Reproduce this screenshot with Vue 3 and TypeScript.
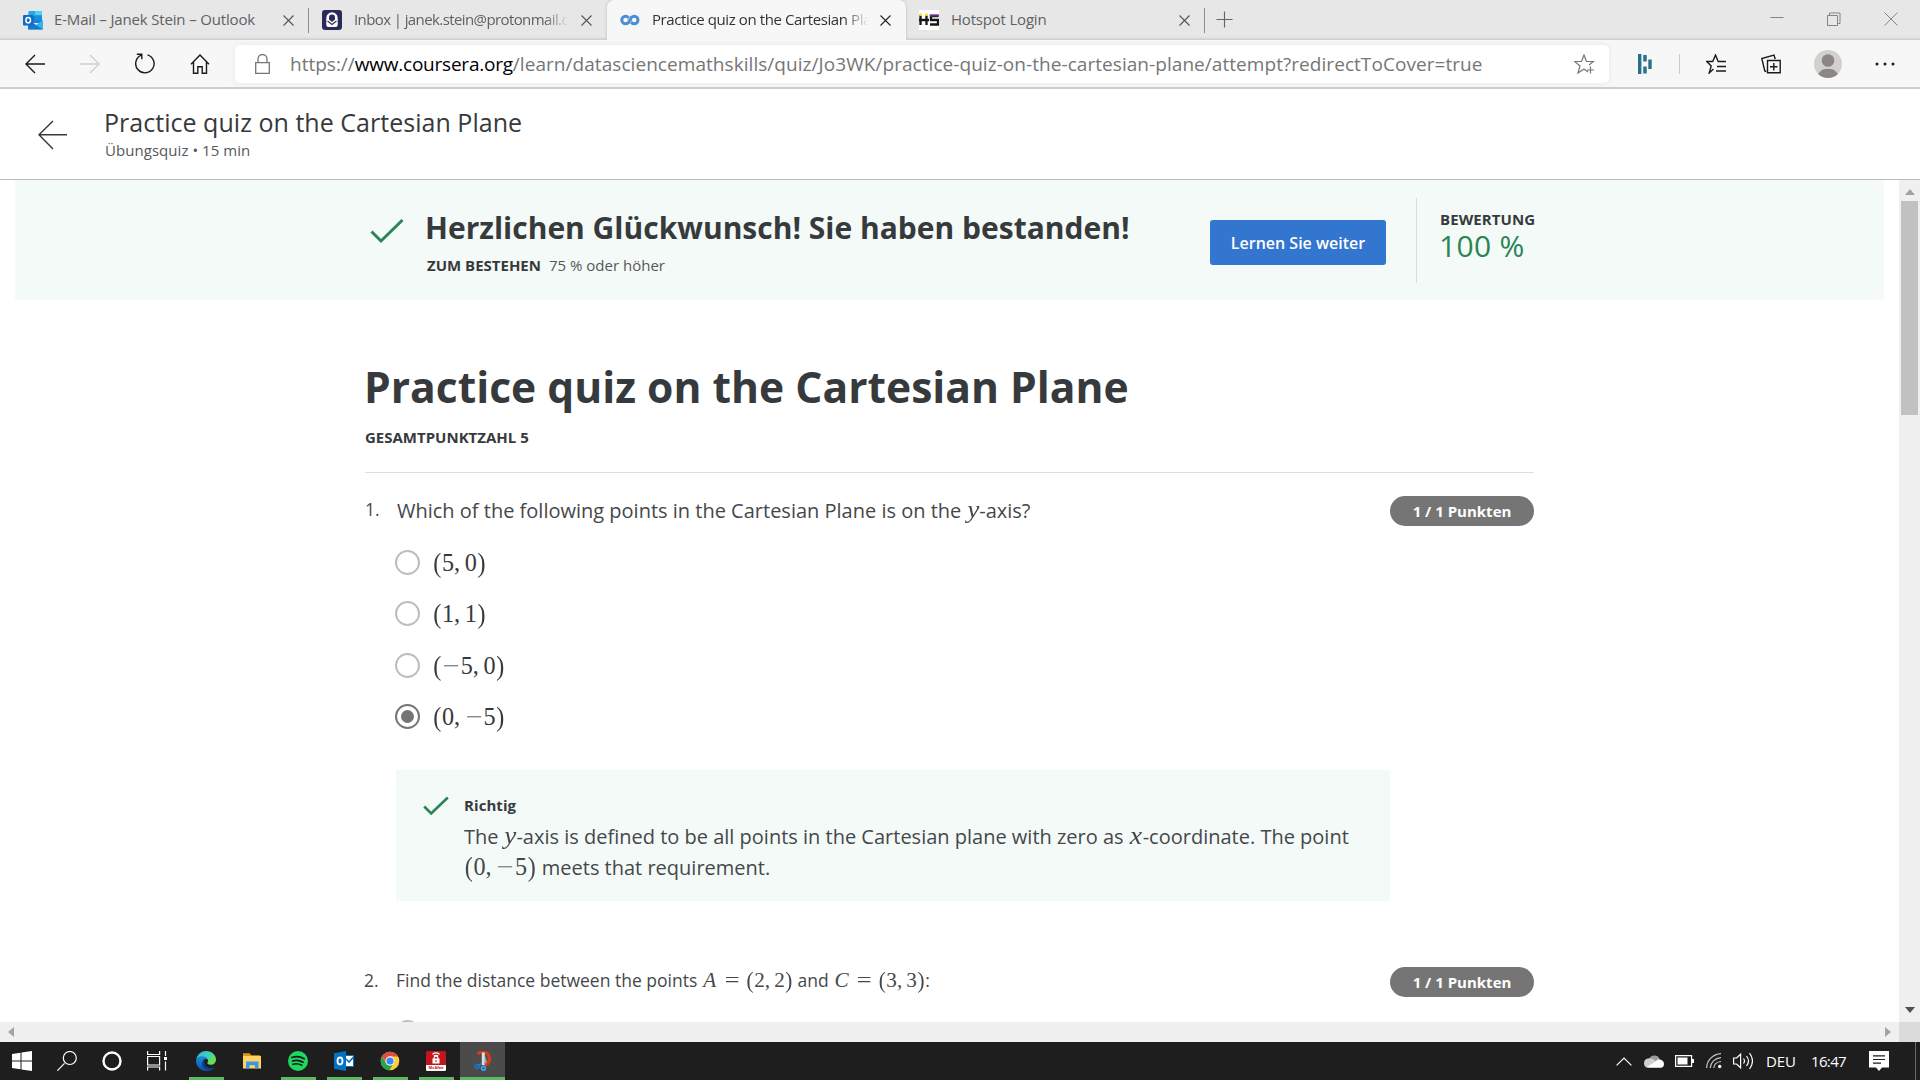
<script setup lang="ts">
import { h } from 'vue'

interface Tab {
  icon: 'outlook' | 'proton' | 'coursera' | 'hotspot'
  title: string
  width: number
  spacing: number
  active?: boolean
  faded?: boolean
  divider?: boolean
}

const tabs: Tab[] = [
  { icon: 'outlook', title: 'E-Mail – Janek Stein – Outlook', width: 309, spacing: -0.16, divider: true },
  { icon: 'proton', title: 'Inbox | janek.stein@protonmail.com', width: 298, spacing: -0.6, faded: true },
  { icon: 'coursera', title: 'Practice quiz on the Cartesian Plane', width: 299, spacing: -0.4, active: true, faded: true },
  { icon: 'hotspot', title: 'Hotspot Login', width: 299, spacing: -0.2, divider: true },
]

const answers = [
  { value: '(5,0)', checked: false },
  { value: '(1,1)', checked: false },
  { value: '(−5,0)', checked: false },
  { value: '(0,−5)', checked: true },
]

const taskbarApps = [
  { name: 'edge', running: true },
  { name: 'explorer', running: false },
  { name: 'spotify', running: true },
  { name: 'outlook', running: true },
  { name: 'chrome', running: true },
  { name: 'mcafee', running: true },
  { name: 'snip', running: true },
]

/* Advance widths in em for typeset math glyphs */
const glyphClass: Record<string, string> = {
  '(': 'tex-paren', ')': 'tex-paren', ',': 'tex-comma', '−': 'tex-minus', '=': 'tex-eq',
  A: 'tex-A', C: 'tex-C', x: 'tex-x', y: 'tex-y',
}
const Tex = (props: { t: string }) =>
  h('span', { class: 'tex' }, [...props.t].map((c) => h('span', { class: glyphClass[c] ?? 'tex-digit' }, c)))
Tex.props = ['t']
</script>

<template>
  <div class="screen">
    <div class="tabbar">
      <div v-for="tab in tabs" :key="tab.title" class="tab" :class="{ active: tab.active, divider: tab.divider }" :style="{ width: tab.width + 'px' }">
        <svg v-if="tab.icon === 'outlook'" class="favicon" viewBox="0 0 20 20">
          <rect x="5.5" y="1" width="13.5" height="12" rx="1" fill="#1a82d6" />
          <rect x="12" y="1" width="7" height="4.5" fill="#50d0f5" />
          <rect x="6" y="1" width="6" height="5" fill="#28a8ea" />
          <rect x="12" y="5.5" width="7" height="4.5" fill="#1490df" />
          <path d="M5 10l8 5 7-5v8.500q0 1-1 1H6q-1 0-1-1z" fill="#33b1f0" />
          <path d="M5 10l15 9.500H6q-1 0-1-1z" fill="#1a78c8" />
          <rect x="0" y="5" width="10.500" height="10.500" rx="1" fill="#0f6cc4" />
          <ellipse cx="5.200" cy="10.200" rx="2.300" ry="2.600" fill="none" stroke="#fff" stroke-width="1.500" />
        </svg>
        <svg v-else-if="tab.icon === 'proton'" class="favicon" viewBox="0 0 20 20">
          <rect width="20" height="20" rx="3" fill="#2b2a5a" />
          <path d="M4.300 14.500V8a5.700 5.700 0 0 1 11.400 0v6.500q0 2.500-2.500 2.500H6.800q-2.500 0-2.500-2.500z" fill="#fff" />
          <path d="M7 9.500V7.500a3 3 0 0 1 6 0v2l-3 2.500z" fill="#2b2a5a" />
          <path d="M5.500 11l4.500 3.500 4.500-3.500" fill="none" stroke="#2b2a5a" stroke-width="1.100" />
        </svg>
        <svg v-else-if="tab.icon === 'coursera'" class="favicon" viewBox="0 0 20 20">
          <circle cx="5.600" cy="10" r="3.800" fill="none" stroke="#4a8fd3" stroke-width="3" />
          <circle cx="14.200" cy="10" r="3.800" fill="none" stroke="#4a8fd3" stroke-width="3" />
          <path d="M9.900 7.500v5" stroke="#f7f7f7" stroke-width="2.800" />
          <path d="M8.300 12.800q1.200-1 1.700-2.800t1.700-2.800" fill="none" stroke="#4a8fd3" stroke-width="2.600" />
        </svg>
        <svg v-else class="favicon" viewBox="0 0 20 20">
          <rect width="20" height="20" fill="#fff" />
          <path d="M1.500 5v10M7.500 5v10M0 10h10M19.500 6h-7.500v4h7v4.500h-8" fill="none" stroke="#161616" stroke-width="2.300" />
          <path d="M.4 4.800h2.400M6.400 4.800h2.400" stroke="#f3e11c" stroke-width="2.600" />
          <path d="M10.800 5.500h9" stroke="#6d2a8c" stroke-width="2" />
        </svg>
        <span class="tab-title" :class="{ faded: tab.faded }" :style="{ letterSpacing: tab.spacing + 'px' }">{{ tab.title }}</span>
        <svg class="tab-close" viewBox="0 0 11 11"><path d="M.5.5l10 10M10.500.5l-10 10" /></svg>
      </div>
      <svg class="new-tab" viewBox="0 0 18 18"><path d="M9 .5v17M.5 9h17" /></svg>
      <div class="window-controls">
        <svg viewBox="0 0 14 14"><path d="M.5 5.500h13" /></svg>
        <svg viewBox="0 0 14 14"><path d="M.5 3.500h10v10H.5zM2.500 3.500v-2.500h10.500v10.500h-2.500" /></svg>
        <svg viewBox="0 0 14 14"><path d="M.5.5l13 13M13.500.5l-13 13" /></svg>
      </div>
    </div>

    <div class="toolbar">
      <svg class="ico back" viewBox="0 0 20 20"><path d="M20 10H1M10 1L1 10l9 9" /></svg>
      <svg class="ico fwd" viewBox="0 0 20 20"><path d="M0 10h19M10 1l9 9-9 9" /></svg>
      <svg class="ico reload" viewBox="0 0 20 21"><path d="M12.500 1.800a9.200 9.200 0 1 1-6.300.4M1.800 1.200h5v5" /></svg>
      <svg class="ico home" viewBox="0 0 20 20"><path d="M1 10.200L10 1l9 9.200M3.500 8v11.200h4.300v-6.500h4.400v6.500h4.300V8" /></svg>
      <div class="address">
        <svg class="lock" viewBox="0 0 15 20"><path d="M.7 8.700h13.600v10.600H.7zM3 8.700V5a4.500 4.500 0 0 1 9 0v3.700" /></svg>
        <div class="url"><span class="scheme">https://</span><span class="host">www.coursera.org</span><span class="path">/learn/datasciencemathskills/quiz/Jo3WK/practice-quiz-on-the-cartesian-plane/attempt?redirectToCover=true</span></div>
        <svg class="star" viewBox="0 0 21 20"><path d="M14 18l-4-3-6 4 2-7-5.500-4.500h7L10 1l2.500 6.500h7L15 11M16.500 12.500v7M13 16h7" /></svg>
      </div>
      <svg class="ext" viewBox="0 0 14 20"><path d="M1.700 0v20M7 1v6.500M7 12.500v7M12 5.500v9.500" /></svg>
      <i class="tool-sep"></i>
      <svg class="ico favs" viewBox="0 0 20 20"><path d="M7.500 15L3.200 19l2-7L.8 7.500h5.900L9.500 1l2.700 6.500H20M11 12.500h9M10 17h10" /></svg>
      <svg class="ico colls" viewBox="0 0 20 20"><path d="M6.500 6.500h12.700v12.300H6.500zM12.800 9v7.500M9 12.700h7.500M5.200 17.500L3.800 17 .8 4.500 13 1l1.200 4" /></svg>
      <svg class="avatar" viewBox="0 0 28 28">
        <defs><clipPath id="avatar-clip"><circle cx="14" cy="14" r="14" /></clipPath></defs>
        <g clip-path="url(#avatar-clip)"><rect width="28" height="28" fill="#d3d1cd" /><circle cx="14" cy="10.500" r="6.300" fill="#8c8784" /><path d="M3.500 28c0-6 4.500-9.300 10.500-9.300S24.500 22 24.500 28z" fill="#8c8784" /></g>
      </svg>
      <svg class="dots" viewBox="0 0 20 4"><circle cx="2" cy="2" r="1.500" /><circle cx="10" cy="2" r="1.500" /><circle cx="18" cy="2" r="1.500" /></svg>
    </div>

    <header class="quiz-header">
      <svg class="quiz-back" viewBox="0 0 30 30"><path d="M30 14.800H1M15.500.5L1 14.800l14.500 14.700" /></svg>
      <div>
        <div class="quiz-title">Practice quiz on the Cartesian Plane</div>
        <div class="quiz-sub">Übungsquiz • 15 min</div>
      </div>
    </header>

    <div class="viewport">
      <main class="page">
        <section class="banner">
          <svg class="banner-check" viewBox="0 0 34 26"><path d="M1.500 13.500l9.500 9.500L32.500 2" /></svg>
          <div class="banner-text">
            <h2>Herzlichen Glückwunsch! Sie haben bestanden!</h2>
            <p><b>ZUM BESTEHEN</b><span>75 % oder höher</span></p>
          </div>
          <button class="continue">Lernen Sie weiter</button>
          <div class="grade"><b>BEWERTUNG</b><span>100 %</span></div>
        </section>

        <div class="quiz">
          <h1>Practice quiz on the Cartesian Plane</h1>
          <div class="total">GESAMTPUNKTZAHL 5</div>
          <section class="question first">
            <div class="num">1.</div>
            <div class="prompt">Which of the following points in the Cartesian Plane is on the <Tex t="y" />-axis?</div>
            <div class="badge">1 / 1 Punkten</div>
          </section>
          <div class="answers">
            <label v-for="a in answers" :key="a.value"><i class="radio" :class="{ checked: a.checked }"></i><Tex :t="a.value" /></label>
          </div>
          <section class="feedback">
            <svg class="feedback-check" viewBox="0 0 26 20"><path d="M1.200 10.500l7 7L24.800 1.500" /></svg>
            <div>
              <b>Richtig</b>
              <p>The <Tex t="y" />-axis is defined to be all points in the Cartesian plane with zero as <Tex t="x" />-coordinate. The point<br><Tex t="(0,−5)" /> meets that requirement.</p>
            </div>
          </section>
          <section class="question second">
            <div class="num">2.</div>
            <div class="prompt">Find the distance between the points <Tex t="A=(2,2)" /> and <Tex t="C=(3,3)" />:</div>
            <div class="badge">1 / 1 Punkten</div>
          </section>
          <div class="answers next"><label><i class="radio"></i></label></div>
        </div>
      </main>
      <div class="vscroll">
        <svg viewBox="0 0 10 6"><path d="M5 0l5 6H0z" fill="#a3a3a3" /></svg>
        <div class="thumb"></div>
        <svg class="down" viewBox="0 0 10 6"><path d="M0 0h10L5 6z" fill="#505050" /></svg>
      </div>
    </div>
    <div class="hscroll">
      <svg viewBox="0 0 6 10"><path d="M6 0v10L0 5z" fill="#a3a3a3" /></svg>
      <svg class="right" viewBox="0 0 6 10"><path d="M0 0v10l6-5z" fill="#a3a3a3" /></svg>
      <div class="corner"></div>
    </div>

    <footer class="taskbar">
      <div class="system">
        <svg viewBox="0 0 20 20"><path d="M0 3l8.500-1.200v7.700H0zM9.500 1.600L20 0v9.500H9.500zM0 10.500h8.500v7.700L0 17zM9.500 10.500H20V20L9.500 18.400z" fill="#fff" /></svg>
        <svg viewBox="0 0 20 20"><path d="M.3 19.700L7.500 12.300" class="w" /><circle cx="12.800" cy="7" r="6.500" class="w" /></svg>
        <svg viewBox="0 0 20 20"><circle cx="10" cy="10" r="8.500" class="w bold" /></svg>
        <svg viewBox="0 0 20 20"><path d="M.6 0v3.500h12V0M.6 5.500h12v8.500H.6zM.6 19.500V16h12v3.500M18.500 0v5M18.500 10.500v9" class="w" /><path d="M17 6h3v3h-3z" fill="#fff" /></svg>
      </div>
      <div class="apps">
        <div v-for="app in taskbarApps" :key="app.name" class="app" :class="[app.name, { running: app.running }]">
          <svg v-if="app.name === 'edge'" viewBox="0 0 20 20">
            <defs>
              <linearGradient id="edge-top" x1="0" y1="0" x2="1" y2=".5"><stop offset="0" stop-color="#2bb6e8" /><stop offset=".6" stop-color="#3fd0b8" /><stop offset="1" stop-color="#6fe04c" /></linearGradient>
              <linearGradient id="edge-low" x1="0" y1="0" x2="0" y2="1"><stop offset="0" stop-color="#1590dd" /><stop offset="1" stop-color="#0e4fa5" /></linearGradient>
            </defs>
            <path d="M.3 8C1.500 3 5.500 0 10.200 0 16 0 20 4.200 20 8.500c0 3.500-2.600 5.300-5.200 5.300-2.400 0-3.500-.9-3.500-1.700 0-.6.8-1 .8-2.300C12 7 8.500 5.500 5.500 5.800 3 6 1.200 7 .3 8z" fill="url(#edge-top)" />
            <path d="M0 10c.2-3 3-4.700 6-4.500 3 .1 6 2 6 4.300 0-1.200-1.500-2.300-3-1.700-3.500 1.500-2.500 8.600 5 9.400 1.500.2 3-.2 4.500-1C16.500 19 13.500 20 10.500 20 4.500 20 0 15.500 0 10z" fill="url(#edge-low)" />
            <path d="M9 8.100C6 9 4.500 14 8.300 17.500c3 2.500 8 1.500 10.200-1-4 1.800-9.300.5-10-4.200-.2-1.700 0-3 .5-4.200z" fill="#0d3f84" />
          </svg>
          <svg v-else-if="app.name === 'explorer'" viewBox="0 0 20 20">
            <path d="M1 2.200h6.500l2 2H18v5H1z" fill="#d99a10" /><path d="M1 5h18v12.500H1z" fill="#fcd364" /><path d="M4 10.500h12.500v7h-3.500v-3.300H7.500v3.300H4z" fill="#3a98e2" />
          </svg>
          <svg v-else-if="app.name === 'spotify'" viewBox="0 0 20 20">
            <circle cx="10" cy="10" r="10" fill="#1ed760" /><path d="M3.800 6.500c4-1.200 9-.8 12.400 1.300M4.500 10c3.500-1 7.500-.6 10.600 1.200M5 13.200c3-.8 6.200-.5 8.800 1" fill="none" stroke="#181818" stroke-width="1.700" stroke-linecap="round" />
          </svg>
          <svg v-else-if="app.name === 'outlook'" viewBox="0 0 20 20">
            <rect x="11.500" y="4.500" width="8" height="11" fill="#fff" stroke="#0072c6" /><path d="M12 8l3 3 5-5.500" fill="none" stroke="#0072c6" stroke-width="1.600" /><path d="M0 2.200L12 0v20L0 17.800z" fill="#0072c6" /><ellipse cx="6" cy="10" rx="2.500" ry="3.500" fill="none" stroke="#fff" stroke-width="1.800" />
          </svg>
          <svg v-else-if="app.name === 'chrome'" viewBox="0 0 20 20">
            <circle cx="10" cy="10" r="9.300" fill="#fccd3c" />
            <path d="M1.900 5.400A9.300 9.300 0 0 0 9.500 19.300L13.800 12 10 10 6.300 12z" fill="#2ba24c" /><path d="M1.900 5.400A9.300 9.300 0 0 1 18.100 5.400L10 5.500 6 11z" fill="#d9503f" />
            <circle cx="10" cy="10" r="4.700" fill="#eef3f8" /><circle cx="10" cy="10" r="3.600" fill="#4285f4" />
          </svg>
          <svg v-else-if="app.name === 'mcafee'" viewBox="0 0 20 20">
            <rect width="20" height="20" rx="1.500" fill="#c3161c" /><path d="M0 14h20v4.500q0 1.500-1.500 1.500h-17Q0 20 0 18.500z" fill="#fff" />
            <path d="M6.500 3.200q3.500-2.700 7 0M7.800 5q2.200-1.600 4.400 0M8 8V7.300a2 2 0 0 1 4 0V8" fill="none" stroke="#fff" stroke-width="1.100" /><rect x="6.500" y="7.500" width="7" height="5" fill="#fff" /><path d="M9.500 9h1v2h-1z" fill="#c3161c" />
            <text x="10" y="18.400" text-anchor="middle" font-family="Open Sans, sans-serif" font-weight="700" font-size="4" fill="#c3161c">McAfee</text>
          </svg>
          <svg v-else viewBox="0 0 20 20">
            <path d="M5 3.200C7-.5 16.500.5 16.500 8c0 4.500-3 6.200-6 6" fill="none" stroke="#cf3f17" stroke-width="3.400" /><path d="M8.800 1.500h3V14h-3z" fill="#dadfe3" /><path d="M12.500 5l1.500 6-3 3z" fill="#9aa5ad" /><path d="M8.500 12.500L4.500 15" stroke="#2d7fd3" stroke-width="2" /><circle cx="4" cy="15.500" r="1.900" fill="none" stroke="#1f6fc2" stroke-width="1.800" /><circle cx="10.500" cy="17.300" r="1.900" fill="none" stroke="#35a4ea" stroke-width="1.800" />
          </svg>
        </div>
      </div>
      <div class="tray">
        <svg class="t-up" viewBox="0 0 16 9"><path d="M.6 8.400L8 1l7.400 7.400" class="w" /></svg>
        <svg class="t-cloud" viewBox="0 0 20 14"><path d="M5 6a5.500 5.500 0 0 1 10.500-1l-3 4-9 2A4 4 0 0 1 5 5z" fill="#9b9b9b" /><path d="M4 4.500q-4 .5-4 4.800 0 3.500 3 4.200l9-6Q8 3.500 4 4.500z" fill="#cfcfcf" /><path d="M2.500 13.200L12 7q2-3 5.500-1Q20 7 20 10q0 3.700-3.500 3.700h-12z" fill="#fff" /></svg>
        <svg class="t-batt" viewBox="0 0 19 12"><path d="M.6.600h16v10.800H.6z" class="w" /><path d="M2.500 2.500h10v7h-10zM17 4h2v4h-2z" fill="#fff" /></svg>
        <svg class="t-wifi" viewBox="0 0 16 16"><g fill="none" stroke="#c8c8c8" stroke-width="1.200"><path d="M.6 15C1 7 7 1 15 .600M4.200 15C4.500 9.500 9 5 15 4.600M7.800 15C8 11.500 11 8.800 15 8.500" /></g><circle cx="13.700" cy="13.500" r="1.700" fill="#fff" /></svg>
        <svg class="t-vol" viewBox="0 0 20 18"><path d="M.6 6h3l4-3.800v13.600L3.600 12h-3zM10.500 6.500q2 2.500 0 5M13.500 4q4 5 0 10M16.500 1q6 8 0 16" class="w" /></svg>
        <span class="lang">DEU</span>
        <span class="clock">16:47</span>
        <svg class="t-note" viewBox="0 0 20 20"><path d="M0 0h20v16.500h-7L10 20l-3-3.500H0z" fill="#fff" /><path d="M4 4.800h12M4 8.500h12M4 12.200h8" stroke="#1e1e1e" stroke-width="1.200" /></svg>
        <i class="desk"></i>
      </div>
    </footer>
  </div>
</template>

<style>
body { margin: 0; overflow: hidden; }
.tex { font-family: "Liberation Serif", serif; font-size: 1.21em; line-height: 0; white-space: nowrap; }
.tex > span { display: inline-block; text-align: center; line-height: 0; }
.tex .tex-digit { width: .5em; }
.tex .tex-paren { width: .389em; transform: scaleY(1.1); }
.tex .tex-comma { width: .445em; text-align: left; }
.tex .tex-minus { width: .778em; transform: scaleX(1.25); color: #77797b; }
.tex .tex-eq { width: .778em; margin: 0 .278em; transform: scaleX(1.25); }
.tex .tex-A { width: .75em; font-style: italic; }
.tex .tex-C { width: .786em; font-style: italic; }
.tex .tex-x { width: .572em; font-style: italic; transform: scaleX(1.15); }
.tex .tex-y { width: .526em; font-style: italic; transform: scaleX(1.12); }
</style>

<style scoped>
.screen { width: 1920px; height: 1080px; overflow: hidden; background: #fff; font-family: "Open Sans", sans-serif; color: #373a3c; display: flex; flex-direction: column; }
svg { display: block; flex: none; }
h1, h2, p { margin: 0; }

.tabbar { height: 40px; flex: none; box-sizing: border-box; background: #e7e7e7; border-bottom: 1px solid #cfcfcf; display: flex; box-shadow: inset 0 -2px 2px -1px #d4d4d4; }
.tab { box-sizing: border-box; height: 40px; flex: none; display: flex; align-items: center; padding: 0 15px 0 13px; position: relative; color: #616161; font-size: 15px; }
.tab:first-child { padding-left: 23px; }
.tab.divider::after { content: ""; position: absolute; right: 0; top: 8px; width: 1px; height: 25px; background: #8e8e8e; }
.tab.active { background: #f7f7f7; border-radius: 7px 7px 0 0; color: #333; box-shadow: 0 0 3px #b8b8b8; clip-path: inset(0 -4px 0 -4px); }
.favicon { width: 20px; height: 20px; margin-right: 12px; }
.tab:first-child .favicon { margin-right: 11px; }
.tab-title { flex: 1; min-width: 0; overflow: hidden; white-space: nowrap; line-height: 24px; margin: 0 12px 2px 0; }
.tab-title.faded { -webkit-mask-image: linear-gradient(90deg, #000 calc(100% - 24px), transparent); mask-image: linear-gradient(90deg, #000 calc(100% - 24px), transparent); }
.tab-close { width: 11px; height: 11px; fill: none; stroke: #555; stroke-width: 1.1; }
.tab.active .tab-close { stroke: #222; }
.new-tab { width: 17px; height: 17px; margin: 11px 0 0 11px; fill: none; stroke: #666; stroke-width: 1.2; }
.window-controls { margin-left: auto; display: flex; gap: 43px; padding: 12px 22px 0 0; fill: none; stroke: #858585; }
.window-controls svg { width: 14px; height: 14px; }

.toolbar { height: 49px; flex: none; box-sizing: border-box; background: #f7f7f7; border-bottom: 2px solid #cdcdcd; display: flex; align-items: center; }
.ico { width: 20px; height: 20px; fill: none; stroke: #1b1b1b; stroke-width: 1.4; }
.back { margin-left: 25px; }
.fwd { margin-left: 35px; stroke: #cfcfcf; }
.reload { margin-left: 35px; height: 21px; }
.home { margin-left: 35px; }
.address { width: 1374px; margin-left: 25px; height: 38px; background: #fff; border-radius: 5px; box-shadow: 0 0 5px #e6e6e6; display: flex; align-items: center; box-sizing: border-box; padding-left: 20px; position: relative; }
.lock { width: 15px; height: 20px; fill: none; stroke: #767676; stroke-width: 1.3; }
.url { margin-left: 20px; font-size: 19px; line-height: 28px; color: #767676; white-space: nowrap; display: flex; }
.host { color: #000; letter-spacing: -.23px; }
.path { letter-spacing: .056px; }
.star { width: 21px; height: 20px; margin-left: auto; margin-right: 14px; fill: none; stroke: #767676; stroke-width: 1.2; }
.ext { width: 14px; height: 20px; margin-left: 29px; fill: none; stroke: #28708a; stroke-width: 3.4; }
.tool-sep { width: 1px; height: 20px; background: #cbcbcb; margin-left: 27px; }
.favs { margin-left: 26px; }
.colls { margin-left: 35px; }
.avatar { width: 28px; height: 28px; margin-left: 33px; }
.dots { width: 20px; height: 4px; margin-left: 33px; fill: #1b1b1b; }

.quiz-header { height: 91px; flex: none; box-sizing: border-box; border-bottom: 1px solid #b9bcbc; display: flex; padding: 16px 0 0 38px; }
.quiz-back { width: 29px; height: 30px; margin: 15px 38px 0 0; fill: none; stroke: #373a3c; stroke-width: 1.5; }
.quiz-title { font-size: 25px; line-height: 35px; letter-spacing: .03px; margin-left: -1px; }
.quiz-sub { font-size: 15px; line-height: 20px; letter-spacing: .05px; color: #55585a; }

.viewport { height: 842px; flex: none; display: flex; }
.page { flex: 1; height: 842px; overflow: hidden; }
.banner { height: 120px; box-sizing: border-box; margin: 0 15px; background: #f4faf8; display: flex; padding-left: 355px; }
.banner-check { width: 34px; height: 26px; margin-top: 38px; fill: none; stroke: #2a8453; stroke-width: 3; }
.banner-text { padding: 28px 0 0 21px; width: 806px; box-sizing: border-box; }
.banner h2 { font-size: 30px; line-height: 40px; font-weight: 700; }
.banner p { font-size: 15px; line-height: 20px; margin: 7px 0 0 2px; display: flex; gap: 8px; }
.banner p span { color: #55585a; }
.continue { width: 176px; height: 45px; margin: 40px 0 0; border: 0; border-radius: 3px; background: #3276d0; color: #fff; font: 600 16px/22px "Open Sans", sans-serif; }
.grade { margin: 18px 0 0 30px; height: 85px; box-sizing: border-box; border-left: 1px solid #d9dddc; padding: 11px 0 0 23px; display: flex; flex-direction: column; }
.grade b { font-size: 15px; line-height: 20px; letter-spacing: .1px; }
.grade span { font-size: 30px; line-height: 34px; color: #2a8453; letter-spacing: .3px; margin-left: -1px; }

.quiz { width: 1169px; margin-left: 365px; padding-top: 56px; }
h1 { font-size: 42.600px; line-height: 60px; font-weight: 700; margin-left: -1px; }
.total { font-size: 15px; line-height: 20px; font-weight: 700; margin-top: 11px; padding-bottom: 25px; border-bottom: 1px solid #dedede; }
.question { display: flex; }
.question.first { margin-top: 22px; }
.num { width: 32px; font-size: 17.5px; line-height: 29px; color: #45484a; }
.prompt { flex: 1; font-size: 20px; line-height: 31px; white-space: nowrap; color: #45484a; }
.badge { width: 144px; height: 30px; margin-top: 1px; border-radius: 15px; background: #757575; color: #fff; font-size: 15px; font-weight: 700; line-height: 30px; text-align: center; }
.answers { margin: 11px 0 0 30px; display: flex; flex-direction: column; font-size: 20px; }
.answers label { height: 51.300px; display: flex; align-items: center; }
.answers label .tex { padding-top: 1px; }
.radio { box-sizing: border-box; width: 25px; height: 25px; border: 2.500px solid #bdbdbd; border-radius: 50%; margin-right: 12.500px; display: flex; align-items: center; justify-content: center; }
.radio.checked { border-color: #757575; }
.radio.checked::after { content: ""; width: 13px; height: 13px; border-radius: 50%; background: #757575; }
.feedback { margin: 27.500px 0 0 31px; width: 994px; height: 131px; box-sizing: border-box; background: #f4faf8; padding: 25px 0 0 27px; display: flex; }
.feedback-check { width: 26px; height: 20px; fill: none; stroke: #2a8453; stroke-width: 2.6; margin: 1px 15px 0 0; }
.feedback b { display: block; font-size: 15px; line-height: 20px; letter-spacing: .08px; }
.feedback p { font-size: 20px; line-height: 31px; margin-top: 6px; white-space: nowrap; color: #45484a; }
.question.second { margin-top: 64px; }
.second .num { line-height: 31px; margin-left: -1px; }
.second .prompt { font-size: 17.500px; }
.second .badge { margin-top: 2px; }
.answers.next { margin-top: 10.500px; }

.vscroll { width: 21px; background: #f0f0f0; display: flex; flex-direction: column; align-items: center; }
.vscroll svg { width: 10px; height: 6px; margin-top: 9px; }
.thumb { width: 17px; height: 214px; background: #c1c1c1; margin-top: 6px; }
.vscroll .down { margin: auto 0 9px; }
.hscroll { height: 20px; flex: none; background: #f0f0f0; display: flex; align-items: center; padding-left: 8px; }
.hscroll svg { width: 6px; height: 10px; }
.hscroll .right { margin-left: auto; margin-right: 8px; }
.corner { width: 21px; height: 20px; background: #dbdbdb; }

.taskbar { height: 38px; flex: none; background: #1e1e1e; display: flex; color: #fff; }
.w { fill: none; stroke: #fff; stroke-width: 1.2; }
.w.bold { stroke-width: 2.4; }
.system { display: flex; gap: 25px; padding: 9px 0 0 12px; }
.system svg, .app svg { width: 20px; height: 20px; }
.apps { display: flex; margin-left: 16px; }
.app { width: 46px; height: 38px; display: flex; justify-content: center; padding-top: 9px; box-sizing: border-box; position: relative; }
.app.running::after { content: ""; position: absolute; bottom: 0; left: 6px; width: 35px; height: 3px; background: #60b865; }
.app.snip { background: #4b4b4b; width: 45px; margin-left: 1px; }
.app.snip::after { left: 0; width: 45px; }
.tray { margin-left: auto; display: flex; align-items: center; font-size: 15px; line-height: 38px; }
.t-up { width: 16px; height: 9px; }
.t-cloud { width: 20px; height: 14px; margin-left: 12px; }
.t-batt { width: 19px; height: 12px; margin-left: 11px; }
.t-wifi { width: 16px; height: 16px; margin-left: 12px; }
.t-vol { width: 20px; height: 18px; margin-left: 11px; }
.lang { margin-left: 13px; width: 29px; letter-spacing: -.1px; }
.clock { margin-left: 16px; width: 36px; letter-spacing: -.65px; }
.t-note { width: 20px; height: 20px; margin-left: 22px; }
.desk { width: 1px; height: 38px; background: #6a6a6a; margin: 0 4px 0 26px; }
</style>
